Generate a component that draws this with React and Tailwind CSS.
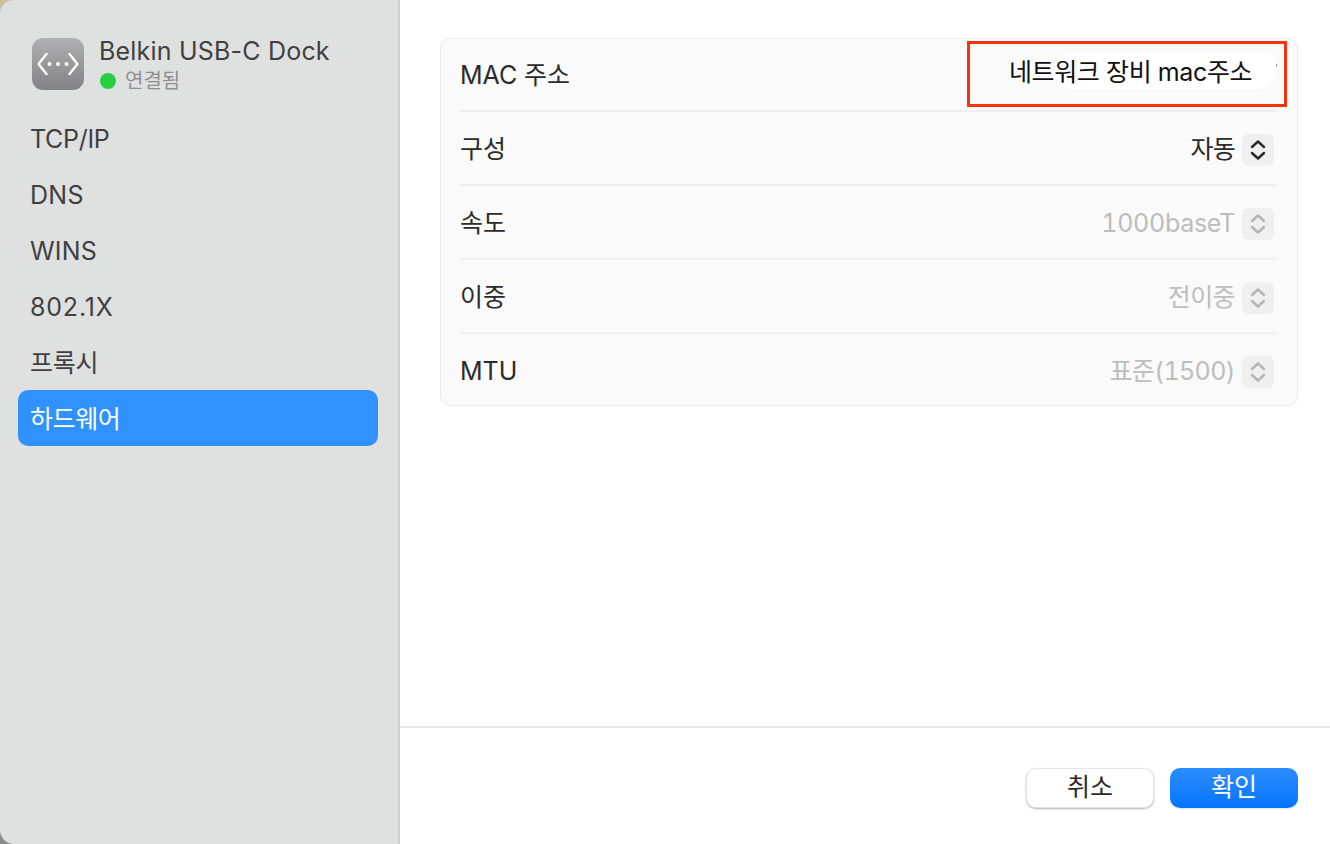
import React from "react";

const FONT = "font-['Inter','Noto_Sans_CJK_KR',sans-serif]";

function Stepper({ disabled }) {
  const stroke = disabled ? "#b4b4b4" : "#2a2a2a";
  return (
    <div className="w-[32px] h-[32px] rounded-[7px] bg-[#efefef] flex items-center justify-center shrink-0">
      <svg width="20" height="26" viewBox="0 0 20 26" fill="none">
        <path d="M4 10 L10 4.5 L16 10" stroke={stroke} strokeWidth="2.4" strokeLinecap="round" strokeLinejoin="round" />
        <path d="M4 16 L10 21.5 L16 16" stroke={stroke} strokeWidth="2.4" strokeLinecap="round" strokeLinejoin="round" />
      </svg>
    </div>
  );
}

function Row({ label, value, disabled, rowClass, valueClass, children }) {
  return (
    <div className={`flex items-center justify-between ${rowClass}`}>
      <span className="text-[25px] text-[#2b2b2b] tabular-nums">{label}</span>
      {children || (
        <div className="flex items-center gap-[7px] mr-[4px]">
          <span className={`text-[25px] tabular-nums ${valueClass} ${disabled ? "text-[#bdbdbd]" : "text-[#2b2b2b]"}`}>{value}</span>
          <Stepper disabled={disabled} />
        </div>
      )}
    </div>
  );
}

function NavItem({ children, active, className = "" }) {
  return (
    <div className={`h-[56px] pt-[4px] px-[12px] flex items-center rounded-[10px] text-[25px] ${className} ${active ? "bg-[#2f92ff] text-white" : "text-[#404040]"}`}>
      {children}
    </div>
  );
}

export default function App() {
  return (
    <div className={`${FONT} w-[1330px] h-[844px] overflow-hidden bg-gradient-to-b from-[#c9bf9f] from-50% to-[#8c8c8c] to-50% relative`}>
      <div className="flex h-full">
        <aside className="w-[400px] h-full shrink-0 bg-[#dfe1e0] border-r-2 border-[#cdcdcc] rounded-tl-[14px] rounded-bl-[14px] pl-[18px] pr-[20px] pt-[38px]">
          <div className="flex items-start gap-[15px] pl-[14px] h-[54px]">
            <div className="w-[52px] h-[52px] rounded-[11px] bg-gradient-to-b from-[#b0afb2] to-[#838286] flex items-center justify-center shrink-0">
              <svg width="44" height="28" viewBox="0 0 44 28" fill="none">
                <path d="M10.5 4 L2.5 14 L10.5 24" stroke="white" strokeWidth="2.4" strokeLinecap="round" strokeLinejoin="round" />
                <path d="M33.5 4 L41.5 14 L33.5 24" stroke="white" strokeWidth="2.4" strokeLinecap="round" strokeLinejoin="round" />
                <circle cx="13.5" cy="14" r="2" fill="white" />
                <circle cx="22" cy="14" r="2" fill="white" />
                <circle cx="30.5" cy="14" r="2" fill="white" />
              </svg>
            </div>
            <div className="flex flex-col">
              <span className="text-[25px] leading-[28px] -mt-[1px] text-[#404040] tracking-[0.2px]">Belkin USB-C Dock</span>
              <div className="flex items-center gap-[9px] pl-[1px] mt-[4px]">
                <span className="w-[16px] h-[16px] rounded-full bg-[#27d041]"></span>
                <span className="text-[20px] leading-[24px] text-[#8f8f8f]">연결됨</span>
              </div>
            </div>
          </div>
          <nav className="mt-[18px] flex flex-col">
            <NavItem className="tracking-[-0.3px]">TCP/IP</NavItem>
            <NavItem className="tracking-[0.3px]">DNS</NavItem>
            <NavItem className="tracking-[0.2px]">WINS</NavItem>
            <NavItem className="tracking-[0.8px]">802.1X</NavItem>
            <NavItem className="tracking-[-0.2px]">프록시</NavItem>
            <NavItem active className="tracking-[-0.4px]">하드웨어</NavItem>
          </nav>
        </aside>
        <main className="flex-1 flex flex-col bg-white">
          <div className="flex-1 pt-[38px] pl-[40px] pr-[32px]">
            <div className="bg-[#fafafa] border border-[#ebebeb] rounded-[10px] px-[19px]">
              <Row label="MAC 주소" rowClass="h-[73px] pt-[3px] border-b-2 border-[#efefef]">
                <span></span>
              </Row>
              <Row label="구성" value="자동" valueClass="tracking-[-0.8px]" rowClass="h-[74px] pt-[4px] border-b-2 border-[#efefef]" />
              <Row label="속도" value="1000baseT" valueClass="tracking-[-0.3px]" disabled rowClass="h-[74px] pt-[4px] border-b-2 border-[#efefef]" />
              <Row label="이중" value="전이중" valueClass="tracking-[-0.6px]" disabled rowClass="h-[74px] pt-[4px] border-b-2 border-[#efefef]" />
              <Row label="MTU" value="표준(1500)" valueClass="tracking-[-0.6px]" disabled rowClass="h-[71px] pt-[4px]" />
            </div>
          </div>
          <footer className="h-[118px] border-t-2 border-[#e6e6e6] flex items-start justify-end gap-[16px] pt-[40px] pr-[32px]">
            <button className="w-[128px] h-[40px] rounded-[10px] bg-white border border-[#e4e4e4] shadow-[0_1px_2px_rgba(0,0,0,0.3)] text-[25px] text-[#2b2b2b] flex items-center justify-center">취소</button>
            <button className="w-[128px] h-[40px] rounded-[10px] bg-gradient-to-b from-[#2a8dfd] to-[#0274ff] shadow-[0_1px_2px_rgba(0,0,0,0.12)] text-[25px] text-white flex items-center justify-center">확인</button>
          </footer>
        </main>
      </div>
      <div className="absolute left-[967px] top-[41px] w-[320px] h-[66px] border-[3px] border-[#f5340f]"></div>
      <div className="absolute left-[1055px] top-[52px] w-[222px] h-[37px] rounded-[18px] bg-white"></div>
      <div className="absolute left-[1276px] top-[64px] w-[1px] h-[3px] bg-[#9a9a9a]"></div>
      <span className="absolute left-[1009px] top-[56px] text-[25px] leading-[32px] text-[#111] tracking-[-0.4px]">네트워크 장비 mac주소</span>
    </div>
  );
}
